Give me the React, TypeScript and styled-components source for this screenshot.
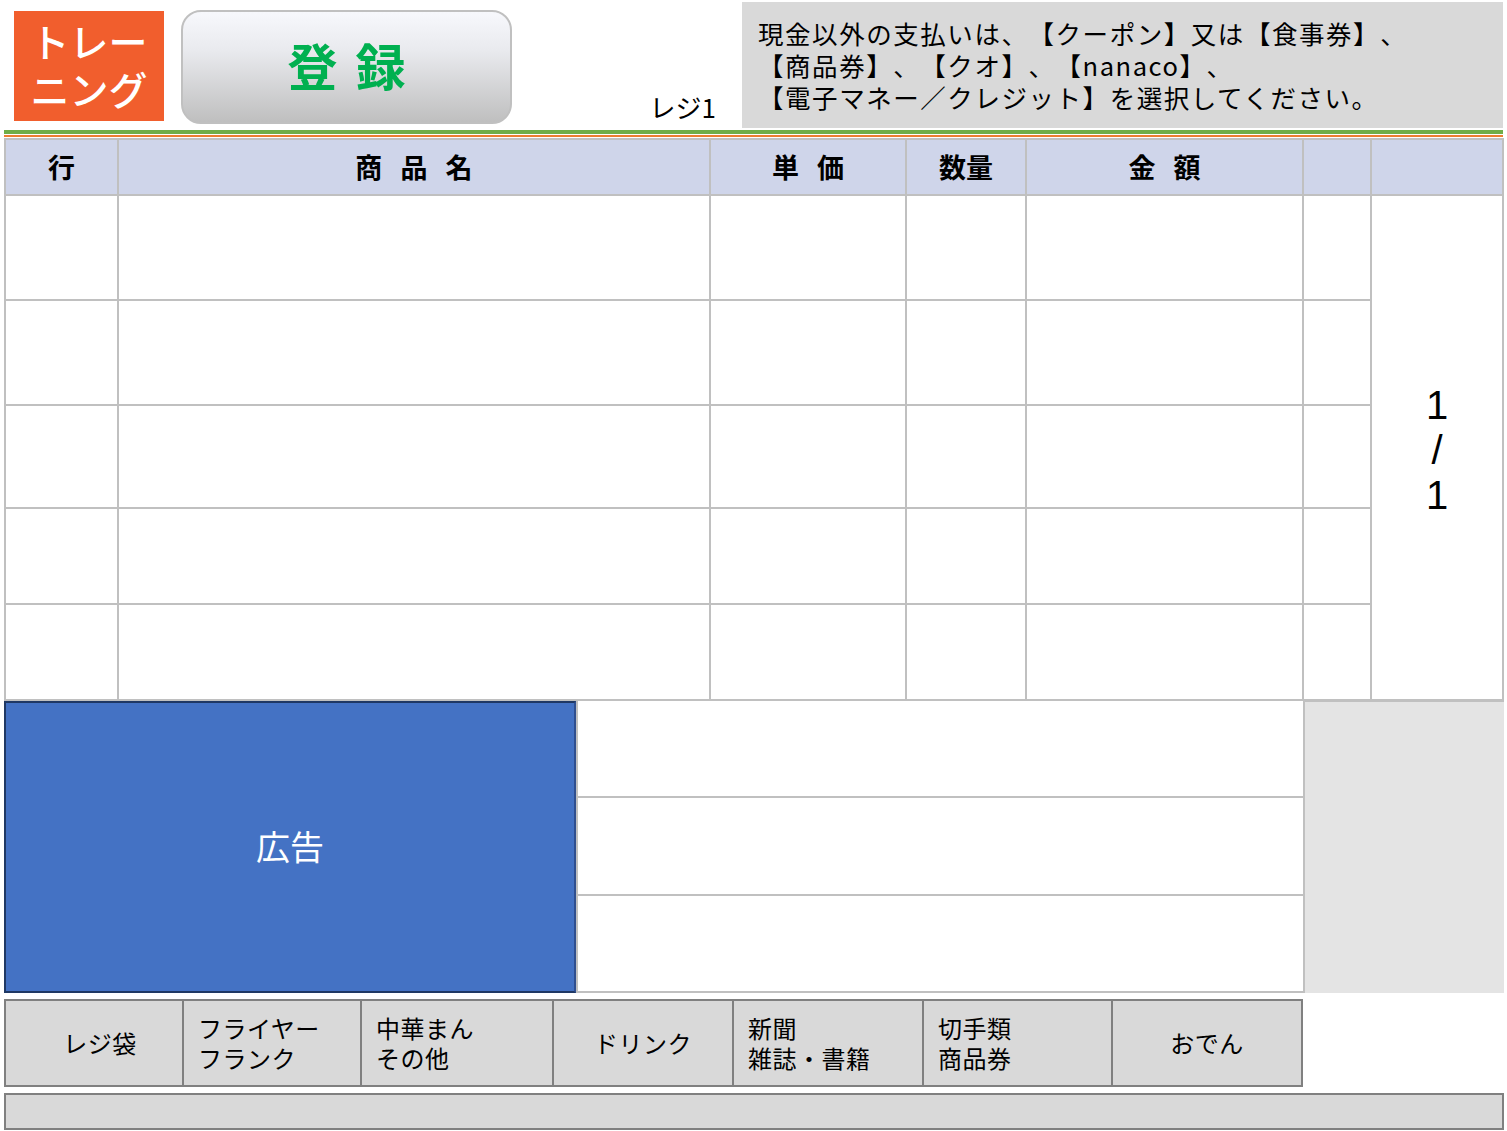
import React from "react";
import styled, { createGlobalStyle } from "styled-components";

const GlobalStyle = createGlobalStyle`
  html, body { margin: 0; padding: 0; background: #ffffff; }
  body {
    font-family: "Noto Sans CJK JP", "Noto Sans", sans-serif;
    color: #000000;
  }
  * { box-sizing: border-box; }
`;

const Page = styled.div`
  width: 1507px;
  height: 1131px;
  overflow: hidden;
  display: flex;
  flex-direction: column;
`;

const TopBar = styled.header`
  display: flex;
  align-items: flex-start;
  height: 128px;
`;

const TrainingBadge = styled.div`
  margin: 11px 0 0 14px;
  width: 150px;
  height: 110px;
  background: #f15e2d;
  color: #ffffff;
  font-size: 39px;
  line-height: 48px;
  font-weight: 500;
  display: flex;
  flex-direction: column;
  align-items: center;
  justify-content: center;
  padding-bottom: 4px;
`;

const RegisterButton = styled.button`
  margin: 10px 0 0 17px;
  width: 331px;
  height: 114px;
  border: 2px solid #c0c0c0;
  border-radius: 20px;
  background: linear-gradient(180deg, #f7f8fc 0%, #e9eaee 35%, #bfbfbf 100%);
  color: #00b050;
  font-family: inherit;
  font-size: 50px;
  font-weight: 700;
  letter-spacing: 18px;
  padding: 0 0 6px 18px;
  cursor: pointer;
`;

const RegisterLabel = styled.div`
  flex: 1;
  align-self: flex-end;
  text-align: right;
  padding: 0 26px 6px 0;
  font-size: 26px;
  line-height: 30px;
`;

const Notice = styled.div`
  margin: 2px 4px 0 0;
  width: 761px;
  height: 126px;
  background: #d9d9d9;
  padding: 15px 0 0 16px;
  font-size: 25.5px;
  line-height: 32px;
  letter-spacing: 1.55px;
  white-space: nowrap;
  text-spacing-trim: space-all;
`;

const Divider = styled.div`
  margin: 2px 4px 0 4px;
  display: flex;
  flex-direction: column;
  gap: 1px;
`;

const Stripe = styled.div<{ $color: string; $h: number }>`
  height: ${(p) => p.$h}px;
  background: ${(p) => p.$color};
`;

const Table = styled.div`
  margin: 1px 3px 0 4px;
  display: grid;
  grid-template-columns: 111px 590px 194px 118px 275px 66px 130px;
  grid-template-rows: 54px 103px 103px 101px 94px 94px;
  gap: 2px;
  padding: 2px;
  background: #c0c0c0;
`;

const HeadCell = styled.div`
  background: #cfd5ea;
  display: flex;
  align-items: center;
  justify-content: center;
  font-size: 27px;
  font-weight: 700;
  word-spacing: 12px;
  padding-bottom: 2px;
`;

const BodyCell = styled.div`
  background: #ffffff;
`;

const PageCell = styled.div`
  background: #ffffff;
  grid-column: 7;
  grid-row: 2 / span 5;
  display: flex;
  flex-direction: column;
  align-items: center;
  justify-content: center;
  font-family: "Liberation Sans", Arial, sans-serif;
  font-size: 40px;
  line-height: 45px;
  padding-top: 6px;
`;

const Lower = styled.div`
  margin: 0 3px 0 4px;
  display: flex;
  height: 292px;
`;

const AdBox = styled.div`
  width: 572px;
  background: #4472c4;
  border: 2px solid #1f3864;
  border-right-color: #2f4f8f;
  color: #ffffff;
  font-size: 34px;
  display: flex;
  align-items: center;
  justify-content: center;
  padding-bottom: 4px;
`;

const InfoRows = styled.div`
  width: 727px;
  display: grid;
  grid-template-rows: 1fr 1fr 1fr;
  gap: 2px;
  background: #c0c0c0;
  padding: 0 0 2px 2px;
`;

const InfoRow = styled.div`
  background: #ffffff;
`;

const SideBlock = styled.div`
  flex: 1;
  background: #e4e4e4;
  border-left: 2px solid #c0c0c0;
  border-top: 1px solid #c0c0c0;
`;

const Categories = styled.div`
  margin: 6px 0 0 4px;
  width: 1299px;
  height: 88px;
  display: grid;
  grid-template-columns: 176px 176px 190px 178px 188px 187px 188px;
  gap: 2px;
  padding: 2px;
  background: #808080;
`;

const CategoryButton = styled.button<{ $align: "center" | "left"; $shift?: number }>`
  border: none;
  margin: 0;
  background: #d9d9d9;
  font-family: inherit;
  color: #000000;
  font-size: 24px;
  line-height: 30px;
  letter-spacing: 0.5px;
  display: flex;
  flex-direction: column;
  justify-content: center;
  align-items: ${(p) => (p.$align === "center" ? "center" : "flex-start")};
  padding: 0 0 0 ${(p) => (p.$align === "center" ? p.$shift ?? 0 : 14)}px;
  text-align: left;
  cursor: pointer;
`;

const StatusBar = styled.div`
  margin: 6px 3px 0 4px;
  height: 37px;
  background: #d9d9d9;
  border: 2px solid #808080;
`;

const headers = ["行", "商 品 名", "単 価", "数量", "金 額", "", ""];
const rowCount = 5;

const categories: { lines: string[]; align: "center" | "left"; shift?: number }[] = [
  { lines: ["レジ袋"], align: "center", shift: 12 },
  { lines: ["フライヤー", "フランク"], align: "left" },
  { lines: ["中華まん", "その他"], align: "left" },
  { lines: ["ドリンク"], align: "center" },
  { lines: ["新聞", "雑誌・書籍"], align: "left" },
  { lines: ["切手類", "商品券"], align: "left" },
  { lines: ["おでん"], align: "center" },
];

export default function App() {
  return (
    <>
      <GlobalStyle />
      <Page>
        <TopBar>
          <TrainingBadge>
            <span>トレー</span>
            <span>ニング</span>
          </TrainingBadge>
          <RegisterButton>登録</RegisterButton>
          <RegisterLabel>レジ1</RegisterLabel>
          <Notice>
            <div>現金以外の支払いは、【クーポン】又は【食事券】、</div>
            <div>【商品券】、【クオ】、【nanaco】、</div>
            <div>【電子マネー／クレジット】を選択してください。</div>
          </Notice>
        </TopBar>
        <Divider>
          <Stripe $color="#70ad47" $h={4} />
          <Stripe $color="#ed7d31" $h={2} />
        </Divider>
        <Table>
          {headers.map((h, i) => (
            <HeadCell key={`h${i}`}>{h}</HeadCell>
          ))}
          {Array.from({ length: rowCount }).map((_, r) =>
            Array.from({ length: 6 }).map((__, c) => (
              <BodyCell
                key={`c${r}-${c}`}
                style={{ gridRow: r + 2, gridColumn: c + 1 }}
              />
            ))
          )}
          <PageCell>
            <span>1</span>
            <span>/</span>
            <span>1</span>
          </PageCell>
        </Table>
        <Lower>
          <AdBox>広告</AdBox>
          <InfoRows>
            <InfoRow />
            <InfoRow />
            <InfoRow />
          </InfoRows>
          <SideBlock />
        </Lower>
        <Categories>
          {categories.map((c, i) => (
            <CategoryButton key={i} $align={c.align} $shift={c.shift}>
              {c.lines.map((l, j) => (
                <span key={j}>{l}</span>
              ))}
            </CategoryButton>
          ))}
        </Categories>
        <StatusBar />
      </Page>
    </>
  );
}
